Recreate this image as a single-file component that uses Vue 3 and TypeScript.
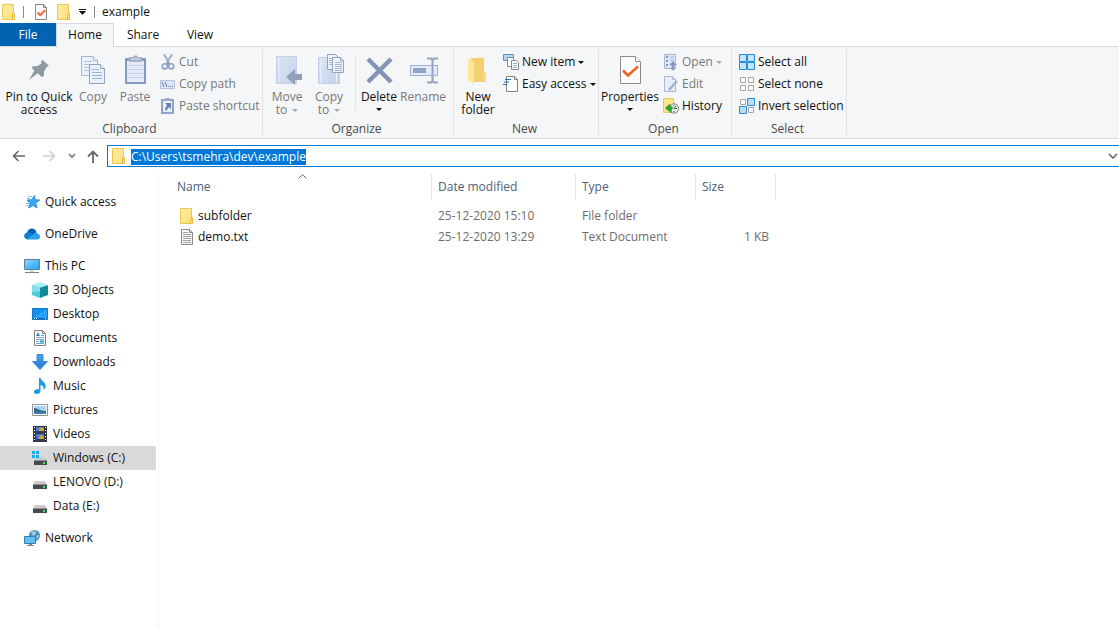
<script setup lang="ts">
import { onMounted, ref } from 'vue'

interface SmallCommand { label: string; icon: string; disabled?: boolean; menu?: boolean }
interface BigCommand { label: string; icon: string; size: string; disabled?: boolean; menu?: 'inline' | 'below'; divider?: boolean }
interface Group { name: string; key: string; big: BigCommand[]; small: SmallCommand[] }
interface Place { label: string; icon: string; child?: boolean; gap?: boolean; current?: boolean }
interface Entry { name: string; icon: string; modified: string; type: string; size: string }

const tabs = ['Home', 'Share', 'View']
const groups: Group[] = [
  {
    name: 'Clipboard', key: 'clipboard',
    big: [
      { label: 'Pin to Quick\naccess', icon: 'pin', size: 'xl' },
      { label: 'Copy', icon: 'copy', size: 'md', disabled: true },
      { label: 'Paste', icon: 'paste', size: 'md', disabled: true },
    ],
    small: [
      { label: 'Cut', icon: 'cut', disabled: true },
      { label: 'Copy path', icon: 'copypath', disabled: true },
      { label: 'Paste shortcut', icon: 'shortcut', disabled: true },
    ],
  },
  {
    name: 'Organize', key: 'organize',
    big: [
      { label: 'Move\nto', icon: 'moveto', size: 'md', disabled: true, menu: 'inline' },
      { label: 'Copy\nto', icon: 'copyto', size: 'md', disabled: true, menu: 'inline' },
      { label: 'Delete', icon: 'delete', size: 'md', menu: 'below', divider: true },
      { label: 'Rename', icon: 'rename', size: 'lg', disabled: true },
    ],
    small: [],
  },
  {
    name: 'New', key: 'new',
    big: [{ label: 'New\nfolder', icon: 'newfolder', size: 'lg' }],
    small: [
      { label: 'New item', icon: 'newitem', menu: true },
      { label: 'Easy access', icon: 'easy', menu: true },
    ],
  },
  {
    name: 'Open', key: 'open',
    big: [{ label: 'Properties', icon: 'properties', size: 'xl', menu: 'below' }],
    small: [
      { label: 'Open', icon: 'open', disabled: true, menu: true },
      { label: 'Edit', icon: 'edit', disabled: true },
      { label: 'History', icon: 'history' },
    ],
  },
  {
    name: 'Select', key: 'select', big: [],
    small: [
      { label: 'Select all', icon: 'all' },
      { label: 'Select none', icon: 'none' },
      { label: 'Invert selection', icon: 'invert' },
    ],
  },
]
const places: Place[] = [
  { label: 'Quick access', icon: 'quick' },
  { label: 'OneDrive', icon: 'onedrive', gap: true },
  { label: 'This PC', icon: 'pc', gap: true },
  { label: '3D Objects', icon: 'objects', child: true },
  { label: 'Desktop', icon: 'desktop', child: true },
  { label: 'Documents', icon: 'documents', child: true },
  { label: 'Downloads', icon: 'downloads', child: true },
  { label: 'Music', icon: 'music', child: true },
  { label: 'Pictures', icon: 'pictures', child: true },
  { label: 'Videos', icon: 'videos', child: true },
  { label: 'Windows (C:)', icon: 'windrive', child: true, current: true },
  { label: 'LENOVO (D:)', icon: 'drive', child: true },
  { label: 'Data (E:)', icon: 'drive', child: true },
  { label: 'Network', icon: 'network', gap: true },
]
const entries: Entry[] = [
  { name: 'subfolder', icon: 'folder', modified: '25-12-2020 15:10', type: 'File folder', size: '' },
  { name: 'demo.txt', icon: 'text', modified: '25-12-2020 13:29', type: 'Text Document', size: '1 KB' },
]

const activeTab = ref('Home')
const path = ref('C:\\Users\\tsmehra\\dev\\example')
const pathBox = ref<HTMLInputElement | null>(null)
onMounted(() => {
  pathBox.value?.focus()
  pathBox.value?.select()
})
</script>

<template>
  <svg class="sprite" aria-hidden="true">
    <defs>
      <linearGradient id="gFolder" x1="0" y1="0" x2="1" y2="1"><stop offset="0" stop-color="#ffeca0" /><stop offset="1" stop-color="#fddf80" /></linearGradient>
      <linearGradient id="gSteel" x1="0" y1="0" x2="1" y2="1"><stop offset="0" stop-color="#d9e4f4" /><stop offset="1" stop-color="#c6d4ea" /></linearGradient>
      <linearGradient id="gScreen" x1="0" y1="0" x2="1" y2="1"><stop offset="0" stop-color="#8fd6ff" /><stop offset="1" stop-color="#1fa0f5" /></linearGradient>
      <linearGradient id="gDown" x1="0" y1="0" x2="0" y2="1"><stop offset="0" stop-color="#4aa3ec" /><stop offset="1" stop-color="#2475cf" /></linearGradient>
    </defs>

    <symbol id="i-folder" viewBox="0 0 16 16">
      <path d="M1.5.5h11v15h-11z" fill="url(#gFolder)" stroke="#ebc651" /><path d="M11.500 10.500l2-1v6h-2z" fill="#ffe27d" stroke="#e5bc42" />
    </symbol>
    <symbol id="i-check" viewBox="0 0 16 16">
      <path d="M2.500.500h8l3 3v12h-11z" fill="#fafafa" stroke="#858585" /><path d="M10.500.500v3h3" fill="none" stroke="#858585" /><path d="M4.500 8.500l2.700 2.700 5-5" fill="none" stroke="#f26522" stroke-width="1.800" />
    </symbol>
    <symbol id="i-text" viewBox="0 0 16 16">
      <path d="M2.500.500h8l3 3v12h-11z" fill="#fafafa" stroke="#8a8a8a" /><path d="M10.500.500v3h3" fill="none" stroke="#8a8a8a" /><path d="M4 3.500h5M4 5.500h8M4 7.500h8M4 9.500h8M4 11.500h8M4 13.500h8" stroke="#a0a0a0" />
    </symbol>

    <symbol id="i-pin" viewBox="0 0 32 32">
      <path d="M19.700 6L26 11.700 23.700 13 21 17.700V22l-2.300 1-4-3.700L6 26l5.300-9.300-2.600-3 1-1.400 4.600-.3 4.400-2.700-.7-2z" fill="#8e9aa2" />
    </symbol>
    <symbol id="i-copy" viewBox="0 0 32 32">
      <g fill="#eaf0f9" stroke="#a3b5d3"><path d="M4.500 2.500h12l4 4v15h-16z" /><path d="M16.500 2.500v4h4" /></g>
      <path d="M7 7.500h8M7 10.500h11M7 13.500h6M7 16.500h6" stroke="#b4c4de" />
      <g fill="#eaf0f9" stroke="#8fa5c8"><path d="M12.500 10.500h11l4 4v15h-15z" /><path d="M23.500 10.500v4h4" /></g>
      <path d="M15 15.500h7M15 18.500h10M15 21.500h10M15 24.500h10" stroke="#9db1d2" />
    </symbol>
    <symbol id="i-paste" viewBox="0 0 32 32">
      <rect x="6" y="4" width="21" height="26" rx="1" fill="#8299c5" /><rect x="8" y="7" width="17" height="21" fill="#e5ecf7" />
      <path d="M8 11.500h17M8 15.500h17M8 19.500h17M8 23.500h17" stroke="#c7d4e9" /><path d="M10 3h4.500V1.500h4V3H23v5H10z" fill="#a6b3c8" /><path d="M12 5h9" stroke="#d9e1ee" />
    </symbol>
    <symbol id="i-cut" viewBox="0 0 16 16">
      <path d="M4 0l5 9M12 0L7 9" stroke="#a0afc6" stroke-width="2" /><g fill="none" stroke="#8ca0c5" stroke-width="1.600"><circle cx="4.800" cy="12.300" r="2.600" /><circle cx="11.200" cy="12.300" r="2.600" /></g><circle cx="8" cy="9" r="1.500" fill="#8799b8" />
    </symbol>
    <symbol id="i-copypath" viewBox="0 0 16 16">
      <path d="M.5 4.500h14v8H.5z" fill="#dbe5f3" stroke="#b3c2da" /><path d="M2 6l2 5M5 6l2 5M8 10.500h1M10 10.500h1M12 10.500h1" stroke="#6681ad" />
    </symbol>
    <symbol id="i-shortcut" viewBox="0 0 16 16">
      <path d="M2 2h11v13H2z" fill="#e9eff8" stroke="#8fa4cc" stroke-width="2" /><path d="M5 0h5v3H5z" fill="#9faec8" /><path d="M5 5h6v6L9 9l-3 4-1-2 2-4z" fill="#6880ad" />
    </symbol>
    <symbol id="i-moveto" viewBox="0 0 32 32">
      <path d="M5.500 2.500h20v27h-20z" fill="url(#gSteel)" stroke="#c1d0e8" /><path d="M8 3v26" stroke="#e5edf8" /><path d="M15 23l9-8v5h7v6h-7v5z" fill="#91a0bb" />
    </symbol>
    <symbol id="i-copyto" viewBox="0 0 32 32">
      <path d="M5.500 3.500h21v26h-21z" fill="url(#gSteel)" stroke="#c1d0e8" /><path d="M8 4v25M23.500 18v11" stroke="#eef3fa" />
      <g fill="#edf2fa" stroke="#8fa5c8"><path d="M14.500.500h8l3 3v12h-11z" /><path d="M19.500 3.500h8l3 3v12h-11z" /><path d="M27.500 3.500v3h3" /></g>
      <path d="M16 4.500h3M16 6.500h3M16 8.500h3M16 10.500h3M22 8.500h7M22 10.500h7M22 12.500h7M22 14.500h7M22 16.500h7" stroke="#a5b8d7" />
    </symbol>
    <symbol id="i-delete" viewBox="0 0 32 32"><path d="M5 5l23 23M28 5L5 28" stroke="#8194b6" stroke-width="4.500" /></symbol>
    <symbol id="i-rename" viewBox="0 0 32 32">
      <path d="M3.500 11.500h27v10h-27z" fill="#e2ebf7" stroke="#9bafd0" /><path d="M6 14h13v5H6z" fill="#8fa3c5" /><path d="M20 4.500h4l1.500 1.500L27 4.500h4M25.500 5v22M20 28.500h4l1.500-1.500 1.500 1.500h4" fill="none" stroke="#91a4c4" stroke-width="2" />
    </symbol>
    <symbol id="i-newfolder" viewBox="0 0 32 32">
      <path d="M9 4h13v15l2 1v8H9z" fill="#f4cf70" /><path d="M6 4l6 4v22l-6-3z" fill="#ffe69a" /><path d="M20 17l4 2v8h-4z" fill="#f8d77d" />
    </symbol>
    <symbol id="i-newitem" viewBox="0 0 16 16">
      <path d="M.5.500h10v6H.5z" fill="#b4d8f4" stroke="#5b91b8" /><path d="M4.500 3.500h6v9h-6z" fill="#fff" stroke="#848c92" /><path d="M8.500 6.500h5l2 2v7h-7z" fill="#fff" stroke="#848c92" /><path d="M10 9.500h4M10 11.500h4M10 13.500h4" stroke="#82add4" />
    </symbol>
    <symbol id="i-easy" viewBox="0 0 16 16">
      <path d="M3.500.500h8l3 3v12h-11z" fill="#fff" stroke="#828282" /><path d="M11.500.500v3h3" fill="none" stroke="#828282" /><path d="M2 3.500h6M1 6h5M0 8.500h4" stroke="#246eb8" stroke-width="1.200" />
    </symbol>
    <symbol id="i-properties" viewBox="0 0 32 32">
      <path d="M6.500 2.500h15l5 5v22h-20z" fill="#fbfbfb" stroke="#8b8b8b" /><path d="M21.500 2.500v5h5" fill="#fff" stroke="#8b8b8b" /><path d="M9 16.500l5 5L24 12.500" fill="none" stroke="#f26322" stroke-width="2.600" />
    </symbol>
    <symbol id="i-open" viewBox="0 0 16 16">
      <path d="M1.500.500h11v14h-11z" fill="#dfe8f5" stroke="#a6b7d3" /><path d="M3 2h2v2H3zM3 6h2v2H3zM3 10h2v2H3z" fill="#8097c0" /><path d="M7 3h4M7 6h4" stroke="#98abca" /><path d="M10 7l4 4h-2.500v5h-3v-5H6z" fill="#8499bd" />
    </symbol>
    <symbol id="i-edit" viewBox="0 0 16 16">
      <path d="M1.500.500h8l3 3v12h-11z" fill="#e6edf8" stroke="#a9b9d4" /><path d="M9.500.500v3h3" fill="none" stroke="#a9b9d4" /><path d="M14 5L6 14" stroke="#a0b2cf" stroke-width="2.500" />
    </symbol>
    <symbol id="i-history" viewBox="0 0 16 16">
      <path d="M.5.500h10v14H.5z" fill="#ffe48c" stroke="#eac75a" /><circle cx="11" cy="10.500" r="4.700" fill="#e5e8e9" stroke="#7d8284" /><path d="M13 8l-2 2.500h3M11 14v-1M11 7v1" fill="none" stroke="#596063" /><path d="M2 10l5-4.500V8c2 0 3 1 3.500 2.500C9 10 8 12 9 15c-2-.5-2.500-1.500-2.500-2.500V14z" fill="#2ba52b" />
    </symbol>
    <symbol id="i-all" viewBox="0 0 16 16">
      <path d="M.5.500h7v7h-7zM8.500.500h7v7h-7zM.5 8.500h7v7h-7zM8.500 8.500h7v7h-7z" fill="#c2e4fc" stroke="#278bdc" />
    </symbol>
    <symbol id="i-none" viewBox="0 0 16 16">
      <path d="M1.500 1.500h5v5h-5zM9.500 1.500h5v5h-5zM1.500 9.500h5v5h-5zM9.500 9.500h5v5h-5z" fill="#fafafa" stroke="#a6a6a6" />
    </symbol>
    <symbol id="i-invert" viewBox="0 0 16 16">
      <path d="M1.500 1.500h5v5h-5zM9.500 9.500h5v5h-5z" fill="#fafafa" stroke="#a6a6a6" /><path d="M8.500.500h7v7h-7zM.5 8.500h7v7h-7z" fill="#b9e0fb" stroke="#278bdc" />
    </symbol>

    <symbol id="i-quick" viewBox="0 0 16 16">
      <path d="M10.500 1.500l.5 4.300 4.800.2-4 3 1.200 5-4-2.500L4.500 14 6 9.300 3 6l4.500-.2z" fill="#38aaf2" stroke="#1681ce" stroke-width=".8" /><path d="M4 2.500h4M3 4.500h3M2 9.500h3M2 11.500h2" stroke="#7cc5f2" />
    </symbol>
    <symbol id="i-onedrive" viewBox="0 0 16 16">
      <path d="M3 7.500C3.500 1 11.500 1 12.500 6.500L9 11z" fill="#0a5db8" /><path d="M3.500 13.500c-4.500 0-4.500-7 .5-7.300 2-.1 4 1.300 5.500 2.300z" fill="#127bd3" /><path d="M3 13.500l6.500-5.300c1-2.200 3.700-2 4.200-.2 3.200.2 3 5.300-.2 5.500z" fill="#28a4ea" />
    </symbol>
    <symbol id="i-pc" viewBox="0 0 16 16">
      <path d="M.5 1.500h15v10H.5z" fill="url(#gScreen)" stroke="#5d819c" /><path d="M6 12h4v2H6z" fill="#d2dbe2" /><path d="M1 14.500h14" stroke="#71889c" />
    </symbol>
    <symbol id="i-objects" viewBox="0 0 16 16">
      <path d="M0 3l8 2.500V16l-8-3z" fill="#4fcbd9" /><path d="M8 5.500L16 3v10l-8 3z" fill="#13899b" /><path d="M0 3l8-3 8 3-8 2.500z" fill="#a5edf2" /><path d="M0 3l8 2.500V9l-8 1z" fill="#83dfe7" />
    </symbol>
    <symbol id="i-desktop" viewBox="0 0 16 16"><path d="M.5 2.500h15v11H.5z" fill="#1492ec" stroke="#1178cb" /><path d="M1 12L15 3v9z" fill="#29a3f7" /><path d="M1 12.500h14" stroke="#0b62a9" /><path d="M2 12.500h1M4 12.500h1M13 12.500h1" stroke="#fff" /></symbol>
    <symbol id="i-documents" viewBox="0 0 16 16">
      <path d="M2.500.500h8l3 3v12h-11z" fill="#fff" stroke="#818181" /><path d="M10.500.500v3h3" fill="none" stroke="#818181" /><path d="M4 6L6 2l2 4z" fill="#278ad4" /><path d="M9 5.500h3M4 7.500h8M4 9.500h8M4 13.500h8" stroke="#7aa3c0" /><path d="M4 11.500h3" stroke="#7aa3c0" /><path d="M8 11.500h4" stroke="#1e9ce5" stroke-width="2" />
    </symbol>
    <symbol id="i-downloads" viewBox="0 0 16 16"><path d="M5 .500h6v7h4.500L8 15.500.500 7.500H5z" fill="url(#gDown)" stroke="#3f8dd6" /></symbol>
    <symbol id="i-music" viewBox="0 0 16 16"><path d="M7 0h1.500c.5 3 5 4 5 7.500 0 2-1 3.500-2 4.500.8-2.800-.8-4.500-3-5V13c0 2-2 3-4 3-3 0-3.500-3.500-.5-4.500 1-.4 2-.3 3 0z" fill="#119de9" /></symbol>
    <symbol id="i-pictures" viewBox="0 0 16 16"><path d="M.5 2.500h15v11H.5z" fill="#fff" stroke="#929292" /><path d="M2 4h12v8H2z" fill="#a6d8f6" /><path d="M2 6c4 0 5 3 12 3v3H2z" fill="#316d84" /><path d="M2 10h12v2H2z" fill="#3f80ba" /></symbol>
    <symbol id="i-videos" viewBox="0 0 16 16">
      <path d="M1 0h14v16H1z" fill="#373737" /><path d="M4 1h8v6H4zM4 8h8v7H4z" fill="#4c79cb" /><path d="M7 3l2-2 3 2v2H7zM7 11l2-2 3 2v2H7z" fill="#d6a430" /><path d="M4 5h8v2H4zM4 13h8v2H4z" fill="#293d68" /><path d="M2.500 1v15M13.500 1v15" stroke="#fff" stroke-dasharray="1 2" />
    </symbol>
    <symbol id="i-drive" viewBox="0 0 16 16"><path d="M3 7h10l2 4H1z" fill="#c9cccd" /><path d="M1 10h14v5H1z" fill="#45494b" /><path d="M1 10.500h14" stroke="#8e9294" /><path d="M11 13h2" stroke="#38ec60" stroke-width="2" /></symbol>
    <symbol id="i-windrive" viewBox="0 0 16 16"><path d="M4 7h9l2 4H2z" fill="#c9cccd" /><path d="M2 10h13v5H2z" fill="#45494b" /><path d="M2 10.500h13" stroke="#8e9294" /><path d="M11 13h2" stroke="#38ec60" stroke-width="2" /><path d="M0 1h3v3H0zM4 1h3v3H4zM0 5h3v3H0zM4 5h3v3H4z" fill="#12b0e8" /></symbol>
    <symbol id="i-network" viewBox="0 0 16 16"><circle cx="10.500" cy="5.500" r="5.500" fill="#4c91bd" /><path d="M7 2l4-1 1 3-3 2zM12 6l3-1-1 4z" fill="#a6d3e3" /><path d="M.5 6.500h11v7H.5z" fill="#66bff4" stroke="#347dac" /><path d="M5 14h3v1H5zM3 15h7v1H3z" fill="#718ca0" /></symbol>
  </svg>

  <div class="window">
    <header class="titlebar">
      <svg class="ic"><use href="#i-folder" /></svg>
      <span class="bar bar-a"></span>
      <button class="plain" aria-label="Properties"><svg class="ic"><use href="#i-check" /></svg></button>
      <button class="plain" aria-label="New folder"><svg class="ic"><use href="#i-folder" /></svg></button>
      <button class="plain customize" aria-label="Customize toolbar"><svg width="7" height="6" viewBox="0 0 7 6"><path d="M0 0h7v1H0zM0 2h7L3.500 6z" fill="#111" /></svg></button>
      <span class="bar"></span>
      <h1>example</h1>
    </header>

    <nav class="tabs" aria-label="Ribbon tabs">
      <button class="file">File</button>
      <button v-for="tab in tabs" :key="tab" class="tab" :class="{ active: tab === activeTab }" @click="activeTab = tab">{{ tab }}</button>
    </nav>

    <section class="ribbon" aria-label="Ribbon">
      <div v-for="group in groups" :key="group.key" class="group" :class="group.key">
        <div class="commands">
          <template v-for="cmd in group.big" :key="cmd.icon">
            <span v-if="cmd.divider" class="divider"></span>
            <button class="big" :class="cmd.size" :disabled="cmd.disabled">
              <svg class="ic32"><use :href="'#i-' + cmd.icon" /></svg>
              <span class="label">{{ cmd.label }}<i v-if="cmd.menu === 'inline'" class="caret"></i></span>
              <i v-if="cmd.menu === 'below'" class="caret below"></i>
            </button>
          </template>
          <div v-if="group.small.length" class="stack">
            <button v-for="cmd in group.small" :key="cmd.icon" class="small" :disabled="cmd.disabled">
              <svg class="ic"><use :href="'#i-' + cmd.icon" /></svg>
              <span>{{ cmd.label }}</span><i v-if="cmd.menu" class="caret"></i>
            </button>
          </div>
        </div>
        <div class="group-name">{{ group.name }}</div>
      </div>
    </section>

    <div class="navbar">
      <button class="plain" aria-label="Back"><svg width="14" height="12" viewBox="0 0 14 12"><path d="M6.500 1l-5 5 5 5M1.500 6H13" fill="none" stroke="#666" stroke-width="1.600" /></svg></button>
      <button class="plain forward" aria-label="Forward" disabled><svg width="14" height="12" viewBox="0 0 14 12"><path d="M7.500 1l5 5-5 5M12.500 6H1" fill="none" stroke="#d0d0d0" stroke-width="1.600" /></svg></button>
      <button class="plain recent" aria-label="Recent locations"><svg width="8" height="6" viewBox="0 0 8 6"><path d="M1 1l3 3 3-3" fill="none" stroke="#777" stroke-width="1.600" /></svg></button>
      <button class="plain up" aria-label="Up"><svg width="12" height="13" viewBox="0 0 12 13"><path d="M1 6.500l5-5 5 5M6 1.500V13" fill="none" stroke="#666" stroke-width="1.800" /></svg></button>
      <div class="address">
        <svg class="ic"><use href="#i-folder" /></svg>
        <input ref="pathBox" v-model="path" type="text" aria-label="Address" spellcheck="false" />
        <button class="plain" aria-label="Previous locations"><svg width="10" height="6" viewBox="0 0 10 6"><path d="M1 1l4 4 4-4" fill="none" stroke="#555" stroke-width="1.300" /></svg></button>
      </div>
    </div>

    <main class="content">
      <nav class="sidebar" aria-label="Places">
        <a v-for="place in places" :key="place.label" href="#" :class="{ child: place.child, gap: place.gap, current: place.current }">
          <svg class="ic"><use :href="'#i-' + place.icon" /></svg>{{ place.label }}
        </a>
      </nav>
      <div class="files">
        <table>
          <colgroup><col class="c-name" /><col class="c-date" /><col class="c-type" /><col class="c-size" /></colgroup>
          <thead>
            <tr>
              <th aria-sort="ascending"><span>Name</span><svg class="sort" width="9" height="5" viewBox="0 0 9 5"><path d="M.5 4.500l4-4 4 4" fill="none" stroke="#666" /></svg></th>
              <th>Date modified</th><th>Type</th><th>Size</th>
            </tr>
          </thead>
          <tbody>
            <tr v-for="entry in entries" :key="entry.name">
              <td><div class="name"><svg class="ic"><use :href="'#i-' + entry.icon" /></svg>{{ entry.name }}</div></td>
              <td>{{ entry.modified }}</td><td>{{ entry.type }}</td><td>{{ entry.size }}</td>
            </tr>
          </tbody>
        </table>
      </div>
    </main>
  </div>
</template>

<style>
html, body { margin: 0; background: #fff; }
</style>

<style scoped>
.sprite { position: absolute; width: 0; height: 0; }
.window { min-height: 100vh; display: flex; flex-direction: column; background: #fff; color: #111; font: 12px/16px "Open Sans", "Noto Sans", sans-serif; overflow: hidden; }
button { font: inherit; color: inherit; border: 0; background: none; padding: 0; margin: 0; }
svg { display: block; flex: none; }
.ic { width: 16px; height: 16px; }
.ic32 { width: 32px; height: 32px; }
.plain { display: flex; align-items: center; justify-content: center; }

.titlebar { height: 23px; display: flex; align-items: center; padding-left: 1px; }
.titlebar .plain { margin-right: 7px; }
.bar { width: 1px; height: 12px; background: #8a8a8a; }
.bar-a { margin: 0 9px 0 6px; }
.titlebar .customize { margin: 0 8px 0 0; }
h1 { margin: 0 0 0 7px; padding-top: 1px; font: inherit; }

.tabs { height: 23px; display: flex; border-bottom: 1px solid #dadbdc; }
.tabs button { padding-top: 1px; }
.file { width: 56px; background: #0063b1; color: #fff; }
.tab { width: 56px; }
.tabs .active { width: 58px; margin-bottom: -1px; padding: 0 0 1px; background: #f5f6f7; border: 1px solid #dadbdc; border-bottom: 0; }
.tab:nth-child(3) { width: 58px; }

.ribbon { display: flex; background: #f5f6f7; border-bottom: 1px solid #dadbdc; }
.group { display: flex; flex-direction: column; border-right: 1px solid #e2e3e4; box-sizing: border-box; margin: 2px 0 3px; }
.commands { display: flex; height: 71px; padding-top: 2px; }
.group-name { text-align: center; color: #4a4a4a; line-height: 13px; padding-right: 3px; }
.clipboard { width: 263px; }
.clipboard .commands { padding-left: 8px; }
.organize { width: 191px; }
.organize .commands { padding-left: 3px; }
.new { width: 145px; }
.new .commands { padding-left: 1px; }
.open { width: 133px; }
.select { width: 115px; }
.select .commands { padding-left: 7px; }
.big { display: flex; flex-direction: column; align-items: center; justify-content: flex-start; padding-top: 3px; line-height: 13px; }
.big .ic32 { margin-bottom: 4px; }
.label { white-space: pre; text-align: center; }
.big.md { width: 42px; }
.big.lg { width: 46px; }
.big.xl { width: 62px; }
.clipboard .xl { margin-right: 2px; }
.divider { width: 1px; height: 54px; margin: 5px 2px 0 5px; background: #e2e3e4; }
button:disabled { color: #787878; }
.caret { display: inline-block; width: 0; height: 0; border: 3px solid transparent; border-top-color: currentColor; border-bottom: 0; vertical-align: middle; margin-left: 5px; }
.caret.below { margin: 5px 0 0; }
button:disabled .caret { opacity: .6; }
.stack { display: flex; flex-direction: column; }
.clipboard .stack { margin-left: 4px; }
.open .stack, .new .stack { margin-left: 2px; }
.small { display: flex; align-items: center; height: 22px; white-space: nowrap; }
.small .ic { margin-right: 3px; }
.small .caret { margin-left: 3px; }

.navbar { display: flex; align-items: center; padding: 6px 0 6px 12px; }
.forward { margin-left: 16px; }
.recent { margin-left: 12px; }
.up { margin: 0 8px 0 11px; }
.address { flex: 1; min-width: 0; display: flex; align-items: center; height: 20px; border: 1px solid #0078d7; border-right: 0; padding: 0 1px 0 3px; }
.address input { flex: 1; min-width: 0; height: 16px; margin-left: 4px; padding: 1px 0 0; border: 0; outline: 0; font: inherit; color: #111; caret-color: transparent; }
.address input::selection { background: #0078d7; color: #fff; }

.content { flex: 1; display: flex; }
.sidebar { width: 158px; border-right: 1px solid #f3f3f3; padding-top: 17px; }
.sidebar a { display: flex; align-items: center; gap: 5px; height: 24px; width: 132px; padding-left: 24px; color: #111; text-decoration: none; }
.sidebar a.gap { margin-top: 8px; }
.sidebar a.child { width: 124px; padding-left: 32px; }
.sidebar a.current { background: #d9d9d9; }
.files { flex: 1; padding-top: 1px; }
table { border-collapse: separate; border-spacing: 0; table-layout: fixed; width: 617px; }
.c-name { width: 273px; }
.c-date { width: 144px; }
.c-type { width: 120px; }
.c-size { width: 80px; }
th { position: relative; height: 26px; padding: 0 6px; text-align: left; font-weight: 400; color: #4c607a; border-right: 1px solid #e5e5e5; }
th:first-child { padding-left: 18px; }
.sort { position: absolute; top: 0; left: 51%; }
td { height: 21px; padding: 0 7px 0 6px; color: #6d6d6d; }
td:first-child { padding-left: 20px; color: #111; }
td:last-child { text-align: right; }
tbody::before { content: ""; display: block; height: 5px; }
.name { display: flex; align-items: center; gap: 3px; }
</style>
